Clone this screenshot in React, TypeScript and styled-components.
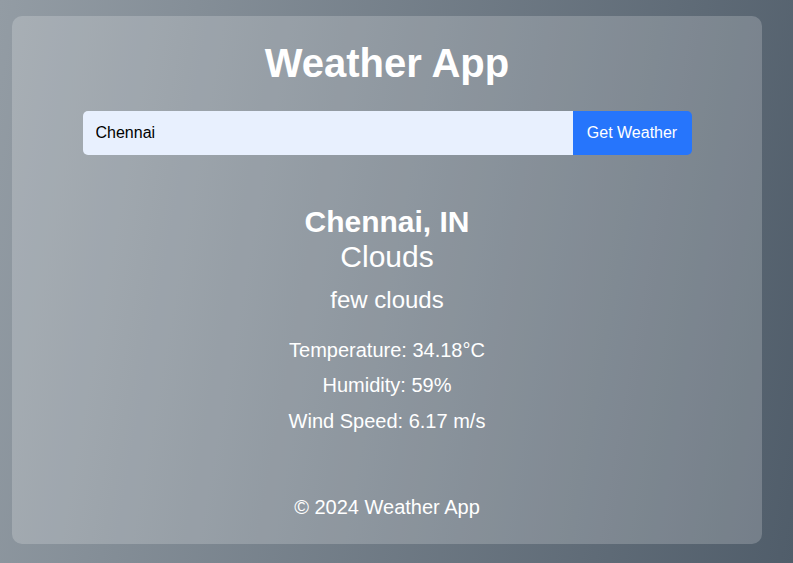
import React from "react";
import styled, { createGlobalStyle } from "styled-components";

const GlobalStyle = createGlobalStyle`
  html, body {
    margin: 0;
    padding: 0;
    height: 100%;
  }
  body {
    font-family: "Liberation Sans", Arial, sans-serif;
    background: linear-gradient(100deg, #939ca4 0%, #505d6a 100%);
    min-height: 563px;
    color: #fff;
  }
`;

const Page = styled.div`
  display: flex;
  align-items: flex-start;
  padding: 16px 0 0 12px;
`;

const Card = styled.main`
  width: 750px;
  height: 528px;
  box-sizing: border-box;
  padding: 24px 0 25px;
  border-radius: 10px;
  background: rgba(255, 255, 255, 0.2);
  display: flex;
  flex-direction: column;
  align-items: center;
`;

const Title = styled.h1`
  margin: 0;
  font-size: 40px;
  font-weight: 700;
  line-height: 46px;
  color: #fff;
`;

const SearchRow = styled.form`
  margin-top: 25px;
  width: 609px;
  height: 44px;
  display: flex;
`;

const SearchInput = styled.input`
  flex: 1;
  min-width: 0;
  border: none;
  outline: none;
  margin: 0;
  padding: 0 13px;
  border-radius: 5px 0 0 5px;
  background: #e8f0fe;
  color: #000;
  font-family: "Liberation Sans", Arial, sans-serif;
  font-size: 16px;
`;

const SearchButton = styled.button`
  width: 119px;
  border: none;
  margin: 0;
  padding: 0;
  border-radius: 0 5px 5px 0;
  background: #2675fc;
  color: #fff;
  font-family: "Liberation Sans", Arial, sans-serif;
  font-size: 16px;
  cursor: pointer;
`;

const Result = styled.section`
  margin-top: 50px;
  display: flex;
  flex-direction: column;
  align-items: center;
`;

const City = styled.h2`
  margin: 0;
  font-size: 30px;
  font-weight: 700;
  line-height: 34.5px;
`;

const Condition = styled.div`
  font-size: 30px;
  line-height: 34.5px;
`;

const Description = styled.div`
  margin-top: 12px;
  font-size: 24px;
  line-height: 27.5px;
`;

const Stats = styled.div`
  margin-top: 25px;
  display: flex;
  flex-direction: column;
  align-items: center;
  gap: 12.5px;
`;

const Stat = styled.p`
  margin: 0;
  font-size: 20px;
  line-height: 23px;
`;

const Footer = styled.footer`
  margin-top: auto;
  font-size: 20px;
  line-height: 23px;
`;

export default function App() {
  return (
    <>
      <GlobalStyle />
      <Page>
        <Card>
          <Title>Weather App</Title>
          <SearchRow onSubmit={(e) => e.preventDefault()}>
            <SearchInput type="text" defaultValue="Chennai" />
            <SearchButton type="submit">Get Weather</SearchButton>
          </SearchRow>
          <Result>
            <City>Chennai, IN</City>
            <Condition>Clouds</Condition>
            <Description>few clouds</Description>
            <Stats>
              <Stat>Temperature: 34.18°C</Stat>
              <Stat>Humidity: 59%</Stat>
              <Stat>Wind Speed: 6.17 m/s</Stat>
            </Stats>
          </Result>
          <Footer>© 2024 Weather App</Footer>
        </Card>
      </Page>
    </>
  );
}
